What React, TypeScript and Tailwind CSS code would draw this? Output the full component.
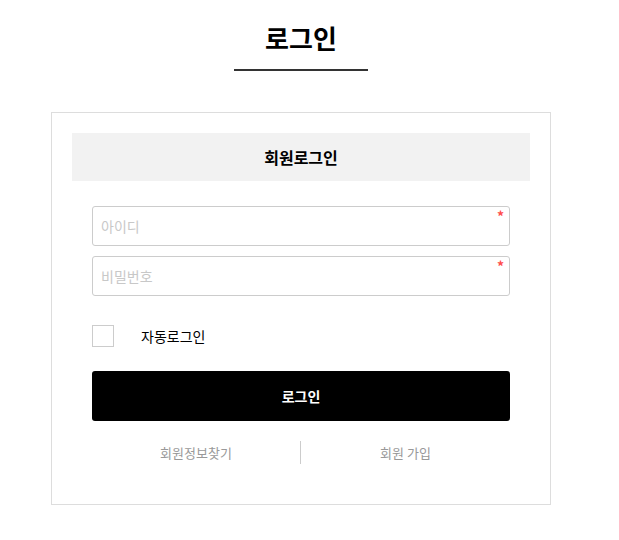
import React, { useState } from 'react';

const FONT = { fontFamily: '"Noto Sans CJK KR", "Noto Sans", sans-serif' };

const Field: React.FC<{ placeholder: string; type?: string }> = ({ placeholder, type = 'text' }) => (
    <div className="relative">
        <input
            type={type}
            placeholder={placeholder}
            className="w-full h-[40px] px-[8px] border border-[#cccccc] rounded-[3px] text-[14px] text-[#333] placeholder:text-[#c8c8c8] outline-none"
        />
        <span className="absolute top-[2px] right-[6px] text-[14px] leading-[16px] font-bold text-[#ff4d4d]">*</span>
    </div>
);

export default function App() {
    const [auto, setAuto] = useState(false);

    return (
        <div className="w-[602px] min-h-[540px] bg-white" style={FONT}>
            {/* Title */}
            <div className="pt-[20px] flex flex-col items-center">
                <h1 className="text-[26px] leading-[36px] font-bold text-black">로그인</h1>
                <div className="mt-[13px] w-[134px] h-[2px] bg-[#333333]" />
            </div>

            {/* Login box */}
            <div className="mx-auto mt-[41px] w-[500px] border border-[#dddddd] px-[20px] pt-[20px] pb-[40px]">
                <div className="h-[48px] bg-[#f2f2f2] flex items-center justify-center">
                    <h2 className="text-[16px] font-bold text-black">회원로그인</h2>
                </div>

                <div className="px-[20px] pt-[25px]">
                    <div className="flex flex-col gap-[10px]">
                        <Field placeholder="아이디" />
                        <Field placeholder="비밀번호" type="password" />
                    </div>

                    <label className="mt-[29px] flex items-center cursor-pointer">
                        <span
                            onClick={() => setAuto(!auto)}
                            className="w-[22px] h-[22px] border border-[#cccccc] bg-white"
                        />
                        <span className="ml-[27px] text-[14px] text-black">자동로그인</span>
                    </label>

                    <button className="mt-[24px] w-full h-[50px] bg-black text-white rounded-[3px] text-[14px] font-bold">
                        로그인
                    </button>

                    <div className="mt-[20px] flex items-center h-[23px]">
                        <a className="w-[208px] text-center text-[13px] text-[#999999]">회원정보찾기</a>
                        <div className="w-px h-[23px] bg-[#cccccc]" />
                        <a className="flex-1 text-center text-[13px] text-[#999999]">회원 가입</a>
                    </div>
                </div>
            </div>
        </div>
    );
}
